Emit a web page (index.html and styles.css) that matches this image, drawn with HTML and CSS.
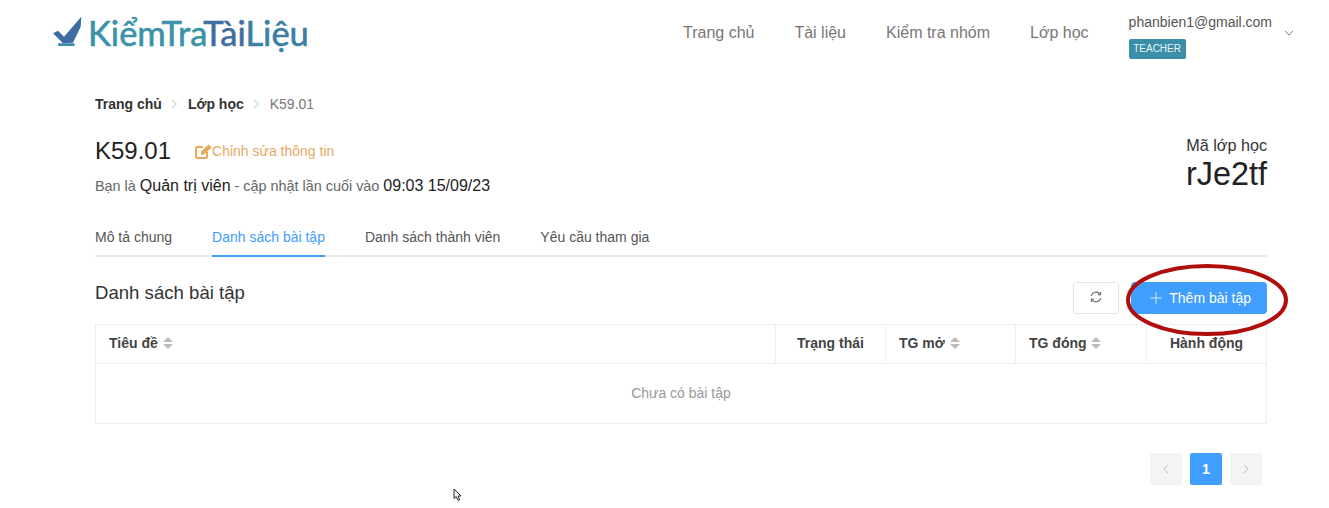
FILE: index.html
```html
<!DOCTYPE html>
<html lang="en">
<head>
    <meta charset="UTF-8">
    <meta name="viewport" content="width=device-width, initial-scale=1.0">
    <title>K59.01 - KiemTraTaiLieu</title>
    <link rel="stylesheet" href="styles.css">
</head>
<body>

    <header class="topbar">
        <a class="logo" href="#">
            <svg class="logo-mark" width="30" height="31" viewBox="0 0 30 31">
                <path d="M0 17.3 L5 14.7 L11 20.7 L28.3 0.7 L27.7 10.7 L20 26.7 L10 27.3 Z" fill="#3f6d9f"/>
                <rect x="5" y="27.3" width="16.7" height="2.8" rx="1" fill="#3a8ea8"/>
            </svg>
            <span class="logo-text"><span class="logo-teal">KiểmTra</span><span class="logo-blue">Tài</span><span class="logo-mid">Liệu</span></span>
        </a>

        <nav class="main-nav">
            <a href="#">Trang chủ</a>
            <a href="#">Tài liệu</a>
            <a href="#">Kiểm tra nhóm</a>
            <a href="#">Lớp học</a>
        </nav>

        <div class="user-box">
            <div>
                <div class="user-email">phanbien1@gmail.com</div>
                <span class="role-tag">TEACHER</span>
            </div>
            <svg class="user-caret" width="10" height="6" viewBox="0 0 10 6">
                <path d="M1 1 L5 5 L9 1" fill="none" stroke="#777" stroke-width="1"/>
            </svg>
        </div>
    </header>

    <main class="page">
        <div class="breadcrumb">
            <a href="#">Trang chủ</a>
            <svg class="crumb-sep" width="7" height="10" viewBox="0 0 7 10"><path d="M1 1 L5.5 5 L1 9" fill="none" stroke="#bbb"/></svg>
            <a href="#">Lớp học</a>
            <svg class="crumb-sep" width="7" height="10" viewBox="0 0 7 10"><path d="M1 1 L5.5 5 L1 9" fill="none" stroke="#bbb"/></svg>
            <span>K59.01</span>
        </div>

        <section class="class-head">
            <div>
                <div class="class-title">
                    <h1>K59.01</h1>
                    <a class="edit-link" href="#">
                        <svg width="17" height="15" viewBox="0 0 17 15">
                            <path d="M8 3 H2.5 C1.6 3 1 3.6 1 4.5 V12.5 C1 13.4 1.6 14 2.5 14 H10.5 C11.4 14 12 13.4 12 12.5 V8" fill="none" stroke="#e5a95f" stroke-width="2"/>
                            <path d="M6 7.5 L13.5 0.5 L16.8 3.6 L9 10.5 L6 11 Z" fill="#e5a95f"/>
                        </svg>
                        Chỉnh sửa thông tin
                    </a>
                </div>
                <p class="class-meta">Bạn là <b>Quản trị viên</b> - cập nhật lần cuối vào <b>09:03 15/09/23</b></p>
            </div>
            <div class="class-code">
                <div class="code-label">Mã lớp học</div>
                <div class="code-value">rJe2tf</div>
            </div>
        </section>

        <div class="tabs">
            <a href="#">Mô tả chung</a>
            <a href="#" class="active">Danh sách bài tập</a>
            <a href="#">Danh sách thành viên</a>
            <a href="#">Yêu cầu tham gia</a>
        </div>

        <div class="list-head">
            <h2>Danh sách bài tập</h2>
            <div class="list-actions">
                <button class="btn-reload" aria-label="Tải lại">
                    <svg width="12" height="12" viewBox="0 0 12 12">
                        <path d="M1.2 5 A4.9 4.9 0 0 1 10 3.2 M10.8 7 A4.9 4.9 0 0 1 2 8.8" fill="none" stroke="#666" stroke-width="1.1"/>
                        <path d="M10.6 1 V3.8 H7.8 M1.4 11 V8.2 H4.2" fill="none" stroke="#666" stroke-width="1.1"/>
                    </svg>
                </button>
                <button class="btn-add">
                    <svg width="12" height="12" viewBox="0 0 12 12"><path d="M6 0 V12 M0 6 H12" stroke="#d5e8ff" stroke-width="1"/></svg>
                    Thêm bài tập
                </button>
                <svg class="note-oval" width="164" height="76" viewBox="0 0 164 76">
                    <ellipse cx="82" cy="38" rx="79" ry="34" fill="none" stroke="#b00d0d" stroke-width="4"/>
                </svg>
            </div>
        </div>

        <table class="task-table">
            <thead>
                <tr>
                    <th class="col-title"><span class="sortable">Tiêu đề <i class="sorter"></i></span></th>
                    <th class="col-status center">Trạng thái</th>
                    <th class="col-open"><span class="sortable">TG mở <i class="sorter"></i></span></th>
                    <th class="col-close"><span class="sortable">TG đóng <i class="sorter"></i></span></th>
                    <th class="col-action center">Hành động</th>
                </tr>
            </thead>
            <tbody>
                <tr>
                    <td colspan="5" class="empty">Chưa có bài tập</td>
                </tr>
            </tbody>
        </table>

        <div class="pager">
            <a href="#" class="pager-arrow"><svg width="6" height="10" viewBox="0 0 6 10"><path d="M5 1 L1 5 L5 9" fill="none" stroke="#bbb"/></svg></a>
            <a href="#" class="pager-current">1</a>
            <a href="#" class="pager-arrow"><svg width="6" height="10" viewBox="0 0 6 10"><path d="M1 1 L5 5 L1 9" fill="none" stroke="#bbb"/></svg></a>
        </div>
    </main>

    <svg class="mouse-cursor" width="10" height="14" viewBox="0 0 10 14">
        <path d="M1 1 V10.5 L3.2 8.6 L5 12.5 L6.6 11.7 L5 8 H8 Z" fill="#fff" stroke="#222" stroke-width="1"/>
    </svg>

</body>
</html>
```

FILE: styles.css
```css
body {
    font-family: "Liberation Sans", Arial, sans-serif;
    background-color: #ffffff;
    color: #333;
    margin: 0;
    font-size: 14px;
    position: relative;
    height: 508px;
    overflow: hidden;
}

a {
    color: inherit;
    text-decoration: none;
}

.topbar {
    display: flex;
    align-items: flex-start;
    height: 86px;
    padding: 13px 35px 0 53px;
    box-sizing: border-box;
}

.logo {
    display: flex;
    align-items: flex-start;
    gap: 5px;
    margin-right: auto;
}

.logo-mark {
    margin-top: 3px;
}

.logo-text {
    font-family: "Lato", sans-serif;
    font-size: 34.5px;
    line-height: 40px;
    -webkit-text-stroke: 0.6px currentColor;
}

.logo-teal {
    color: #3a93a8;
}

.logo-blue {
    color: #3f6d9f;
}

.logo-mid {
    color: #3b7fa5;
}

.main-nav {
    display: flex;
    gap: 40px;
    margin-top: 11px;
    margin-right: 40px;
    font-size: 16px;
    line-height: 18px;
    color: #777;
}

.user-box {
    display: flex;
    align-items: center;
    gap: 12px;
}

.user-email {
    line-height: 18px;
    margin-bottom: 8px;
    color: #555;
}

.role-tag {
    display: block;
    width: 57px;
    text-align: center;
    background-color: #3a8ea8;
    color: #e8f4f7;
    font-size: 10px;
    line-height: 20px;
    border-radius: 2px;
}

.user-caret {
    margin-top: -6px;
}

.page {
    margin: 0 62px 0 95px;
}

.breadcrumb {
    display: flex;
    align-items: center;
    gap: 9.5px;
    line-height: 18px;
    color: #777;
    padding-top: 9px;
}

.breadcrumb a {
    font-weight: bold;
    color: #333;
}

.class-head {
    display: flex;
    justify-content: space-between;
    margin-top: 24px;
}

.class-title {
    display: flex;
    align-items: center;
    gap: 24px;
}

h1 {
    margin: 0;
    font-size: 24px;
    font-weight: normal;
    line-height: 28px;
    color: #222;
}

.edit-link {
    display: flex;
    align-items: center;
    gap: 0;
    color: #e5a95f;
}

.class-meta {
    margin: 11px 0 0;
    line-height: 20px;
    font-size: 14.4px;
    color: #666;
}

.class-meta b {
    font-weight: normal;
    font-size: 16px;
    color: #222;
}

.class-code {
    text-align: right;
}

.code-label {
    font-size: 16.2px;
    line-height: 16px;
    color: #333;
}

.code-value {
    font-size: 32.4px;
    line-height: 43px;
    color: #222;
}

.tabs {
    display: flex;
    gap: 40px;
    margin-top: 23px;
    border-bottom: 2px solid #e8e8e8;
}

.tabs a {
    line-height: 20px;
    padding: 8px 0;
    margin-bottom: -2px;
    color: #555;
}

.tabs a.active {
    color: #409eff;
    border-bottom: 2px solid #409eff;
}

.list-head {
    display: flex;
    justify-content: space-between;
    align-items: flex-start;
    margin-top: 25px;
    margin-bottom: 10px;
}

h2 {
    margin: 0;
    font-size: 18.6px;
    font-weight: normal;
    line-height: 22px;
    color: #333;
}

.list-actions {
    display: flex;
    gap: 12px;
    position: relative;
}

.btn-reload {
    width: 46px;
    height: 32px;
    background-color: #fff;
    border: 1px solid #e5e5e5;
    border-radius: 3px;
}

.btn-add {
    display: flex;
    align-items: center;
    gap: 7px;
    height: 32px;
    padding: 0 16px 0 19px;
    background-color: #409eff;
    color: #fff;
    border: none;
    border-radius: 4px;
    font-family: inherit;
    font-size: 14px;
}

.note-oval {
    position: absolute;
    right: -22px;
    top: -20px;
}

.task-table {
    width: 100%;
    border-collapse: collapse;
    table-layout: fixed;
    border: 1px solid #ebeef5;
}

.task-table th {
    box-sizing: border-box;
    height: 39px;
    padding: 0 13px 2px;
    text-align: left;
    font-size: 14px;
    color: #444;
    border-left: 1px solid #ebeef5;
    border-bottom: 1px solid #ebeef5;
}

.task-table th.center {
    text-align: center;
}

.col-status {
    width: 110px;
}

.col-open {
    width: 130px;
}

.col-close {
    width: 131px;
}

.col-action {
    width: 120px;
}

.sorter {
    display: inline-block;
    position: relative;
    width: 10px;
    height: 12px;
    margin-left: 1px;
    vertical-align: -1px;
}

.sorter::before,
.sorter::after {
    content: "";
    position: absolute;
    left: 0;
    border-left: 5px solid transparent;
    border-right: 5px solid transparent;
}

.sorter::before {
    top: 0;
    border-bottom: 5px solid #bbb;
}

.sorter::after {
    bottom: 0;
    border-top: 5px solid #bbb;
}

.empty {
    box-sizing: border-box;
    height: 60px;
    padding: 0 0 2px;
    text-align: center;
    color: #999;
}

.pager {
    display: flex;
    justify-content: flex-end;
    gap: 8px;
    margin-top: 29px;
    padding-right: 5px;
}

.pager a {
    display: flex;
    align-items: center;
    justify-content: center;
    width: 32px;
    height: 32px;
    border-radius: 2px;
    font-weight: bold;
}

.pager-arrow {
    background-color: #f4f4f7;
}

.pager-current {
    background-color: #409eff;
    color: #fff;
}

.mouse-cursor {
    position: absolute;
    left: 453px;
    top: 488px;
}
```
